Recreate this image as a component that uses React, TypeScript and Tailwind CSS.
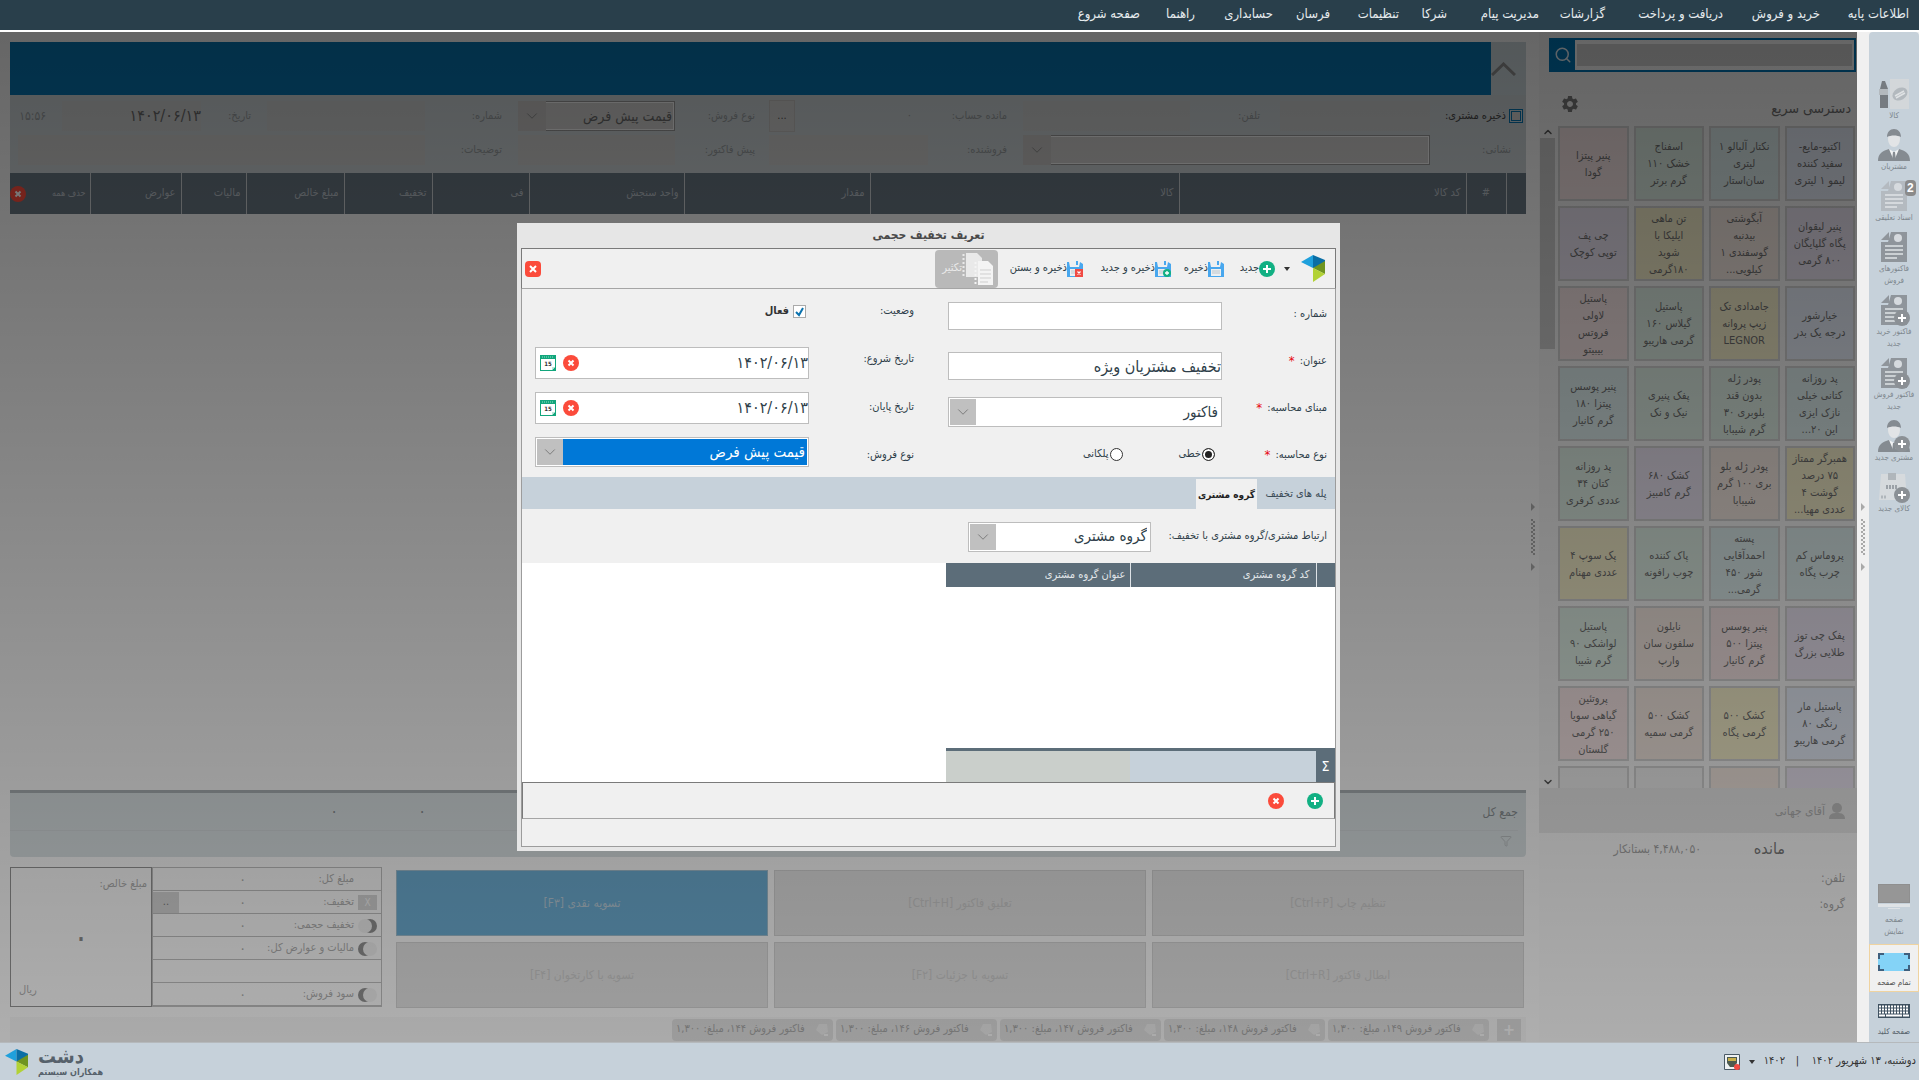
import type { ReactNode } from 'react';
import { ChevronDown, ChevronUp, Search, Filter } from 'lucide-react';
import { MdSettings } from 'react-icons/md';

const menuItems = [
  { title: 'اطلاعات پایه', width: 'w-[65px]' },
  { title: 'خرید و فروش', width: 'w-[73px]' },
  { title: 'دریافت و پرداخت', width: 'w-[94px]' },
  { title: 'گزارشات', width: 'w-[42px]' },
  { title: 'مدیریت پیام', width: 'w-[68px]' },
  { title: 'شرکا', width: 'w-[24px]' },
  { title: 'تنظیمات', width: 'w-[45px]' },
  { title: 'فرسان', width: 'w-[33px]' },
  { title: 'حسابداری', width: 'w-[54px]' },
  { title: 'راهنما', width: 'w-[31px]' },
  { title: 'صفحه شروع', width: 'w-[65px]' },
];

const tileColors = {
  blue: 'bg-[#dde3ee]',
  teal: 'bg-[#d5e4e4]',
  green: 'bg-[#d5e4db]',
  pink: 'bg-[#ecdcdc]',
  purple: 'bg-[#e1dbe8]',
  peach: 'bg-[#eadfd8]',
  yellow: 'bg-[#eae4c2]',
  none: 'bg-[#e6e6e6]',
};

const products: { title: string; color: keyof typeof tileColors }[] = [
  { title: 'اکتیو-مایع-\nسفید کننده\nلیمو ۱ لیتری', color: 'blue' },
  { title: 'نکتار آلبالو ۱\nلیتری\nسان‌استار', color: 'teal' },
  { title: 'اسفناج\nخشک ۱۱۰\nگرم برتر', color: 'green' },
  { title: 'پنیر پیتزا\nگودا', color: 'pink' },
  { title: 'پنیر لیقوان\nپگاه گلپایگان\n۸۰۰ گرمی', color: 'purple' },
  { title: 'آبگوشتی\nبیدنبه\nگوسفندی ۱\nکیلویی...', color: 'peach' },
  { title: 'تن ماهی\nایلیکا با\nشوید\n۱۸۰گرمی', color: 'yellow' },
  { title: 'چی پف\nتوپی کوچک', color: 'purple' },
  { title: 'خیارشور\nدرجه یک بدر', color: 'blue' },
  { title: 'جامدادی تک\nزیپ پروانه\nLEGNOR', color: 'yellow' },
  { title: 'پاستیل\nگیلاس ۱۶۰\nگرمی هاریبو', color: 'green' },
  { title: 'پاستیل\nلاولی\nفروتس\nبیبیتو', color: 'pink' },
  { title: 'پد روزانه\nکتانی خیلی\nنازک ایزی\nاین ۲۰...', color: 'teal' },
  { title: 'پودر ژله\nبدون قند\nبلوبری ۳۰\nگرم شیبابا', color: 'green' },
  { title: 'پفک پنیری\nنیک و نک', color: 'green' },
  { title: 'پنیر پوسس\nپیتزا ۱۸۰\nگرم کانیار', color: 'teal' },
  { title: 'همبرگر ممتاز\n۷۵ درصد\nگوشت ۴\nعددی مهیا...', color: 'yellow' },
  { title: 'پودر ژله بلو\nبری ۱۰۰ گرم\nشیبابا', color: 'peach' },
  { title: 'کشک ۶۸۰\nگرم کامبیز', color: 'purple' },
  { title: 'پد روزانه\nکتان ۳۴\nعددی کرفری', color: 'green' },
  { title: 'پروماس کم\nچرب پگاه', color: 'teal' },
  { title: 'پسته\nاحمدآقایی\nشور ۴۵۰\nگرمی...', color: 'teal' },
  { title: 'پاک کننده\nچوب رافونه', color: 'green' },
  { title: 'پک سوپ ۴\nعددی مهنام', color: 'yellow' },
  { title: 'پفک چی توز\nطلایی بزرگ', color: 'purple' },
  { title: 'پنیر پوسس\nپیتزا ۵۰۰\nگرم کانیار', color: 'pink' },
  { title: 'نایلون\nسلفون سان\nوارپ', color: 'peach' },
  { title: 'پاستیل\nلواشکی ۹۰\nگرم شیبا', color: 'green' },
  { title: 'پاستیل مار\nرنگی ۸۰\nگرمی هاریبو', color: 'blue' },
  { title: 'کشک ۵۰۰\nگرمی پگاه', color: 'yellow' },
  { title: 'کشک ۵۰۰\nگرمی سمیه', color: 'peach' },
  { title: 'پروتئین\nگیاهی سویا\n۲۵۰ گرمی\nگلستان', color: 'pink' },
  { title: '', color: 'purple' },
  { title: '', color: 'peach' },
  { title: '', color: 'none' },
  { title: '', color: 'none' },
];

const columns = [
  { title: '', width: 'w-[20px]' },
  { title: '#', width: 'w-[40px]' },
  { title: 'کد کالا', width: 'w-[287px]' },
  { title: 'کالا', width: '' },
  { title: 'مقدار', width: 'w-[186px]' },
  { title: 'واحد سنجش', width: 'w-[155px]' },
  { title: 'فی', width: 'w-[97px]' },
  { title: 'تخفیف', width: 'w-[88px]' },
  { title: 'مبلغ خالص', width: 'w-[98px]' },
  { title: 'مالیات', width: 'w-[65px]' },
  { title: 'عوارض', width: 'w-[91px]' },
];

const actions = [
  'تنظیم چاپ [Ctrl+P]',
  'تعلیق فاکتور [Ctrl+H]',
  'تسویه نقدی [F۳]',
  'ابطال فاکتور [Ctrl+R]',
  'تسویه با جزئیات [F۲]',
  'تسویه با کارتخوان [F۴]',
];

const invoices = ['۱۴۹', '۱۴۸', '۱۴۷', '۱۴۶', '۱۴۴'];

function Logo({ className }: { className: string }) {
  return (
    <svg viewBox="0 0 24 27" className={className}>
      <path d="M0 7 12 0v13z" fill="#1fa0dc" />
      <path d="M12 0l12 5v6l-12 2z" fill="#0a6ea5" />
      <path d="M24 6v13l-12-6z" fill="#6f9420" />
      <path d="M12 13l12 6-12 8z" fill="#b2d235" />
    </svg>
  );
}

function PlusCircle() {
  return (
    <svg viewBox="0 0 16 16" className="h-4 w-4 shrink-0">
      <circle cx="8" cy="8" r="8" fill="#12b083" />
      <path d="M8 4v8M4 8h8" stroke="#fff" strokeWidth="2" />
    </svg>
  );
}

function CrossCircle() {
  return (
    <svg viewBox="0 0 16 16" className="h-4 w-4 shrink-0">
      <circle cx="8" cy="8" r="8" fill="#fb4b3b" />
      <path d="M5.5 5.5l5 5M10.5 5.5l-5 5" stroke="#fff" strokeWidth="2" />
    </svg>
  );
}

function SaveIcon({ badge }: { badge?: 'plus' | 'close' }) {
  return (
    <svg viewBox="0 0 16 16" className="h-4 w-4 shrink-0">
      <path d="M0 1h2l1 5h9l1-5 3 2v13H0z" fill="#48a7ee" />
      <path d="M4 0h8v5H4z" fill="#eceff1" />
      <path d="M9 0h2v4H9z" fill="#48a7ee" />
      <path d="M3 8h10v7H3z" fill="#eceff1" />
      <path d="M4 10h8M4 12h8" stroke="#bcc6cd" />
      {badge === 'plus' && (
        <>
          <circle cx="12" cy="12" r="4" fill="#12b083" />
          <path d="M12 10v4M10 12h4" stroke="#fff" strokeWidth="1.3" />
        </>
      )}
      {badge === 'close' && (
        <>
          <path d="M8 8h8v8H8z" fill="#f04a43" />
          <path d="M10.5 10.5l3 3M13.5 10.5l-3 3" stroke="#fff" strokeWidth="1.2" />
        </>
      )}
    </svg>
  );
}

function CopyIcon() {
  return (
    <svg viewBox="0 0 32 32" className="h-8 w-8 shrink-0">
      <path d="M4 0h11l5 5v19H4z" fill="#e9e9e9" />
      <path d="M1.500 1v23" stroke="#e9e9e9" strokeWidth="2" strokeDasharray="2 2" />
      <path d="M16 8h10l5 5v19H16z" fill="#f4f4f4" />
      <path d="M13.500 9v23" stroke="#f4f4f4" strokeWidth="2" strokeDasharray="2 2" />
      <path d="M18 17h11M18 21h11M18 25h11M18 29h8" stroke="#cfcfcf" />
    </svg>
  );
}

function CalendarIcon() {
  return (
    <svg viewBox="0 0 16 16" className="h-4 w-4">
      <path d="M0 0h16v16H0z" fill="#12a67c" />
      <path d="M1 4h14v8l-3 3H1z" fill="#fff" />
      <path d="M2 2h12" stroke="#8fe0c6" strokeDasharray="1 1" />
      <path d="M12 15l3-3h-3z" fill="#bfe8dc" />
      <text x="8" y="11" fontSize="6" fontWeight="bold" textAnchor="middle" fill="#333">15</text>
    </svg>
  );
}

function PlusBadge() {
  return (
    <>
      <circle cx="24" cy="24" r="8" fill="#8b9095" />
      <path d="M24 20v8M20 24h8" stroke="#fff" strokeWidth="2" />
    </>
  );
}

function PersonIcon({ plus }: { plus?: boolean }) {
  return (
    <svg viewBox="0 0 32 32" className="h-8 w-8">
      <ellipse cx="16" cy="10" rx="6" ry="8" fill="#e2e4e6" />
      <path d="M9 8c0-5 3-8 7-8s7 3 7 8c-4-2-10-2-14 0z" fill="#858b91" />
      <path d="M0 32c0-8 5-10 11-12l5 5 5-5c6 2 11 4 11 12z" fill="#858b91" />
      <path d="M11 20l5 12 5-12-5 3z" fill="#f2f3f4" />
      <path d="M15 23h2l1 9h-4z" fill="#858b91" />
      {plus && <PlusBadge />}
    </svg>
  );
}

function DocIcon({ plus, light }: { plus?: boolean; light?: boolean }) {
  return (
    <svg viewBox="0 0 32 32" className="h-8 w-8">
      <path d="M13 1h16v30H3V11h7z" fill={light ? '#b4bac0' : '#8f959b'} />
      <path d="M3 9l8-8v8z" fill={light ? '#b4bac0' : '#8f959b'} />
      <circle cx="20" cy="7" r="4" fill="#d6dade" />
      <path d="M7 15h18M7 19h18M7 23h18M7 27h12" stroke="#dfe3e6" strokeWidth="1.5" />
      {plus && <PlusBadge />}
    </svg>
  );
}

function ProductIcon() {
  return (
    <svg viewBox="0 0 32 32" className="h-8 w-8">
      <path d="M12 1h19v30H12z" fill="#d3d7da" />
      <ellipse cx="22" cy="16" rx="8" ry="6" fill="#b3b9be" transform="rotate(-30 22 16)" />
      <path d="M17 18l9-5M18 20l9-5" stroke="#dfe2e4" strokeWidth="1.5" />
      <path d="M4 3h3l3 8v19H2V11z" fill="#757b81" />
      <path d="M1 11h9v6H1z" fill="#b3b9be" />
    </svg>
  );
}

function BoxIcon() {
  return (
    <svg viewBox="0 0 32 32" className="h-8 w-8">
      <path d="M3 3h24l2 26H1z" fill="#d6dadd" />
      <path d="M10 2h8v7h-8z" fill="#b0b6bb" />
      <path d="M8 16h12" stroke="#9ba1a7" strokeWidth="4" strokeDasharray="2 1" />
      <path d="M3 26h6" stroke="#b0b6bb" strokeWidth="3" strokeDasharray="2 1" />
      <PlusBadge />
    </svg>
  );
}

function RailButton({ icon, label, className = 'text-[#7d868d]' }: { icon: ReactNode; label: string; className?: string }) {
  return (
    <button className={`flex w-full flex-col items-center whitespace-pre-line text-center text-[8px] leading-3 ${className}`}>
      {icon}
      <span>{label}</span>
    </button>
  );
}

function Splitter({ className }: { className: string }) {
  return (
    <div className={`flex w-3 shrink-0 flex-col items-center justify-center gap-2 text-[#a9a9a9] ${className}`}>
      <svg viewBox="0 0 4 8" className="h-2 w-1"><path d="M0 0l4 4-4 4z" fill="currentColor" /></svg>
      <svg viewBox="0 0 4 36" className="h-9 w-1">
        <path d="M1 0v36M3 2v34" stroke="currentColor" strokeWidth="2" strokeDasharray="2 2" />
      </svg>
      <svg viewBox="0 0 4 8" className="h-2 w-1"><path d="M0 0l4 4-4 4z" fill="currentColor" /></svg>
    </div>
  );
}

function SelectBox({ id, value, className, selected }: { id: string; value: string; className: string; selected?: boolean }) {
  return (
    <div className={`relative border border-[#bdbdbd] bg-white p-px ${className}`}>
      <select
        id={id}
        defaultValue={value}
        className={`h-full w-full appearance-none pr-[2px] pl-7 text-[15px] outline-none ${selected ? 'bg-[#0078d7] text-white' : 'bg-white text-[#2f3f4a]'}`}
      >
        <option>{value}</option>
      </select>
      <span className="pointer-events-none absolute inset-y-px left-px flex w-[26px] items-center justify-center bg-[#c0c0c0] text-[#666]">
        <ChevronDown size={18} strokeWidth={1} />
      </span>
    </div>
  );
}

function DimSelect({ id, value }: { id: string; value: string }) {
  return (
    <div className="relative h-[30px] w-full">
      <select id={id} defaultValue={value} className="h-full w-full appearance-none border border-[#949494] bg-[#cac9c8] pr-[2px] pl-8 text-[14px] text-[#666] ring-1 ring-inset ring-[#eee] outline-none">
        <option>{value}</option>
      </select>
      <span className="pointer-events-none absolute inset-y-0 left-0 flex w-[28px] items-center justify-center bg-[#c2c0bf] text-[#777]">
        <ChevronDown size={18} strokeWidth={1} />
      </span>
    </div>
  );
}

function QuickAccess() {
  return (
    <aside className="flex w-[318px] shrink-0 flex-col bg-[#ececec]">
      <div className="mt-[6px] mr-px ml-[10px] flex h-[34px] border-2 border-[#0070ad] bg-[#f0f0f0]">
        <input aria-label="جستجو" className="m-1 mr-[2px] ml-[2px] h-[22px] min-w-0 flex-1 bg-[#cacaca] px-1 outline-none" />
        <button aria-label="جستجو" className="flex w-6 shrink-0 items-center justify-center bg-[#0070ad] text-[#dce6ee]">
          <Search size={18} strokeWidth={2} />
        </button>
      </div>
      <div className="flex h-[54px] items-end justify-between pr-[6px] pb-[6px] pl-[21px]">
        <h2 className="text-[14px] leading-6 text-[#6b6b6b]">دسترسی سریع</h2>
        <button aria-label="تنظیمات" className="mb-[6px] text-[#777]"><MdSettings size={20} /></button>
      </div>
      <div className="flex h-[662px]">
        <div className="grid flex-1 auto-rows-[75px] grid-cols-4 gap-[5px] overflow-hidden pr-[2px]">
          {products.map((product, i) => (
            <button key={i} className={`whitespace-pre-line border-2 border-[#cacaca] text-center text-[11px] leading-[17px] text-[#6a6a6a] ${tileColors[product.color]}`}>
              {product.title}
            </button>
          ))}
        </div>
        <div className="mr-[3px] ml-px flex w-[15px] flex-col items-center justify-between text-[#555]">
          <ChevronUp size={12} strokeWidth={3} />
          <div className="mb-auto h-[211px] w-[15px] bg-[#c6c6c6]" />
          <ChevronDown size={12} strokeWidth={3} />
        </div>
      </div>
      <div className="flex h-[45px] items-center gap-1 bg-[#e0e0e0] pr-3 text-[12px] text-[#aaa]">
        <svg viewBox="0 0 16 16" className="h-4 w-4">
          <circle cx="8" cy="5" r="5" fill="#bbb" />
          <path d="M0 16c0-5 3-6 8-6s8 1 8 6z" fill="#bbb" />
        </svg>
        آقای جهانی
      </div>
      <div className="flex-1 bg-[#f0f0f0] text-[12px] text-[#a0a0a0]">
        <div className="flex h-8 items-center pr-[72px]">
          <span className="w-[84px] text-[16px] text-[#777]">مانده</span>
          <span className="whitespace-nowrap">۴,۴۸۸,۰۵۰ بستانکار</span>
        </div>
        <p className="pr-3 leading-[26px]">تلفن:</p>
        <p className="pr-3 leading-[26px]">گروه:</p>
      </div>
    </aside>
  );
}

function InvoiceHeader() {
  return (
    <div>
      <div className="flex h-[53px] bg-[#c5d0d4]">
        <button aria-label="بستن" className="flex w-[35px] items-center justify-end text-[#8a8a8a]">
          <svg viewBox="0 0 25 14" className="h-[14px] w-[25px]"><path d="M1 13L12.5 2 24 13" fill="none" stroke="currentColor" strokeWidth="3" /></svg>
        </button>
        <div className="flex-1 bg-[#0670aa]" />
      </div>
      <div className="grid h-[78px] grid-cols-[93px_1fr_95px_159px_94px_157px_93px_1fr] grid-rows-[34px_34px] content-start items-center bg-[#c5cccf] pt-1 pr-[3px] pl-2 text-[11px] text-[#929799]">
        <label className="flex items-center gap-[3px] whitespace-nowrap text-[#444]">
          <input type="checkbox" className="h-[14px] w-[14px] shrink-0 appearance-none border border-[#0670aa] bg-[#cfcccb] shadow-[inset_0_0_0_1px_#c5d0d4,inset_0_0_0_2px_#0670aa]" />
          ذخیره مشتری:
        </label>
        <div className="flex items-center">
          <div className="h-[30px] w-[150px] bg-[#c7c9c9]" />
          <span className="w-[90px] pr-5">تلفن:</span>
          <div className="h-[30px] flex-1 bg-[#c7c9c9]" />
        </div>
        <span className="pr-4">مانده حساب:</span>
        <div className="flex items-center justify-between pr-4">
          <span>۰</span>
          <button className="h-8 w-[26px] border border-[#bcbab8] bg-[#c9c9c8] text-[#555]">...</button>
        </div>
        <label htmlFor="saleKind" className="pr-[14px]">نوع فروش:</label>
        <DimSelect id="saleKind" value="قیمت پیش فرض" />
        <span className="pr-4">شماره:</span>
        <div className="flex items-center">
          <div className="h-[30px] w-[158px] bg-[#c7c9c9]" />
          <span className="w-[66px] pr-4">تاریخ:</span>
          <span className="flex h-[30px] flex-1 items-center bg-[#c7c9c9] text-[16px] text-[#666]">۱۴۰۲/۰۶/۱۳</span>
          <span className="w-11 pr-4 text-[12px]">۱۵:۵۶</span>
        </div>

        <label htmlFor="address" className="pr-3">نشانی:</label>
        <DimSelect id="address" value="" />
        <span className="pr-4">فروشنده:</span>
        <div className="h-[30px] bg-[#c9c9c8]" />
        <span className="pr-[14px]">پیش فاکتور:</span>
        <div className="h-[30px] bg-[#c9c9c8]" />
        <span className="pr-4">توضیحات:</span>
        <div className="h-[30px] bg-[#c9c9c8]" />
      </div>
      <table className="w-full table-fixed bg-[#66747f] text-[11px] text-[#b4bbc2]">
        <thead>
          <tr className="h-[41px]">
            {columns.map((column, i) => (
              <th key={i} className={`border-l border-[#c5c9cc] font-normal ${column.width} ${column.title === '#' ? 'text-center' : 'pr-[5px] text-right'}`}>
                {column.title}
              </th>
            ))}
            <th className="w-[80px] pr-1 font-normal">
              <div className="flex items-center justify-between text-[9px]">
                حذف همه
                <CrossCircle />
              </div>
            </th>
          </tr>
        </thead>
      </table>
    </div>
  );
}

function Toggle({ on }: { on?: boolean }) {
  return (
    <svg viewBox="0 0 20 14" className="h-[14px] w-5">
      <circle cx={on ? 12 : 7} cy="7" r="7" fill="#8d8d8d" />
      <circle cx={on ? 7 : 12} cy="7" r="7" fill="#e8e8e8" />
    </svg>
  );
}

function SummaryRow({ label, icon, value = '۰', more }: { label: string; icon?: ReactNode; value?: string; more?: boolean }) {
  return (
    <div className="flex h-[23px] items-center border-b border-[#b9b9b9] pt-px">
      <span className="flex w-[27px] justify-center">{icon}</span>
      <span className="w-[102px] whitespace-nowrap">{label}</span>
      <span className="flex-1 pr-[6px] text-[14px]">{value}</span>
      {more && <button className="h-full w-[26px] bg-[#cfcfcf] text-[#777]">..</button>}
    </div>
  );
}

function InvoiceFooter() {
  return (
    <div>
      <div className="h-[67px] rounded-b border-t-[3px] border-[#a4aaae] bg-[#d3dadc] pr-2 text-[12px] text-[#858b8e]">
        <div className="flex h-[38px] items-center border-b border-[#ccd2d4]">
          <span className="w-[1092px]">جمع کل</span>
          <span className="w-[88px] text-[16px]">۰</span>
          <span className="text-[16px]">۰</span>
        </div>
        <Filter size={12} className="mt-1 mr-[6px] text-[#b5babc]" />
      </div>
      <div className="flex gap-[14px] pt-[10px] pr-[2px]">
        <div className="grid flex-1 grid-cols-3 gap-[6px] pt-[3px] text-[12px]">
          {actions.map((action, i) => (
            <button
              key={action}
              className={i === 2 ? 'h-[66px] border border-[#9bb8c8] bg-[#6aa8cc] text-[#b4c6d2]' : 'h-[66px] border border-[#ccc] bg-[#dbdbdb] text-[#c6c6c6]'}
            >
              {action}
            </button>
          ))}
        </div>
        <div className="flex h-[140px] text-[11px] text-[#a8a8a8]">
          <div className="w-[230px] border border-[#b9b9b9]">
            <SummaryRow label="مبلغ کل:" />
            <SummaryRow label="تخفیف:" more icon={<span className="bg-[#cecece] px-[6px] text-[10px] text-[#eee]">X</span>} />
            <SummaryRow label="تخفیف حجمی:" icon={<Toggle on />} />
            <SummaryRow label="مالیات و عوارض کل:" icon={<Toggle />} />
            <SummaryRow label="" value="" />
            <SummaryRow label="سود فروش:" icon={<Toggle />} />
          </div>
          <div className="flex w-[142px] flex-col justify-between border border-[#8f8f8f] p-1 py-2">
            <span>مبلغ خالص:</span>
            <span className="text-center text-[32px] leading-8 text-[#888]">۰</span>
            <span className="pl-1 text-left">ریال</span>
          </div>
        </div>
      </div>
      <div className="mt-[9px] flex h-[25px] items-center gap-[3px] bg-[#ececec] pr-[5px] text-[11px] text-[#a2a2a2]">
        <button aria-label="فاکتور جدید" className="ml-[5px] h-[22px] w-6 bg-[#d6d6d6] text-base leading-5 font-bold text-[#f0f0f0]">+</button>
        {invoices.map((number) => (
          <button key={number} className="flex h-[22px] w-[161px] items-center justify-between rounded-sm bg-[#d8d8d8] px-1 whitespace-nowrap">
            <svg viewBox="0 0 14 14" className="h-[14px] w-[14px] shrink-0">
              <path d="M4 1l8 0 1 8-6 3-6-5z" fill="#e4e4e4" />
              <path d="M9 11h4v2H9z" fill="#eee" />
            </svg>
            <span>فاکتور فروش {number}، مبلغ: ۱,۳۰۰</span>
          </button>
        ))}
      </div>
    </div>
  );
}

function ToolButton({ icon, label }: { icon: ReactNode; label: string }) {
  return (
    <button className="flex h-full items-center text-[11px] whitespace-nowrap text-[#2f3f4a]">
      {icon}
      {label}
    </button>
  );
}

function FieldLabel({ id, text, required }: { id: string; text: string; required?: boolean }) {
  return (
    <label htmlFor={id} className="flex h-5 items-center gap-[5px] whitespace-nowrap text-[11px] text-[#2f3f4a]">
      {text} {required && <span className="text-[13px] text-red-600">*</span>}
    </label>
  );
}

function DateField({ id }: { id: string }) {
  return (
    <div className="flex h-8 items-center gap-[7px] border border-[#bdbdbd] bg-white pl-1">
      <input id={id} defaultValue="۱۴۰۲/۰۶/۱۳" className="min-w-0 flex-1 text-[16px] text-[#2f3f4a] outline-none" />
      <button aria-label="پاک کردن"><CrossCircle /></button>
      <button aria-label="تقویم"><CalendarIcon /></button>
    </div>
  );
}

function DiscountDialog() {
  return (
    <section role="dialog" aria-labelledby="dialogTitle" className="w-[823px] bg-[#e6e6e6] px-1 pb-1">
      <h1 id="dialogTitle" className="h-[25px] text-center text-[12px] leading-[25px] font-bold text-[#4a4a4a]">تعریف تخفیف حجمی</h1>
      <div className="flex h-[41px] items-center border border-[#7a7a7a] border-b-[#a5a5a5] bg-[#f0f0f0] pr-[10px] pl-[3px]">
        <Logo className="h-[27px] w-6" />
        <button aria-label="منو" className="mr-[11px] ml-[9px] border-x-[3px] border-t-4 border-x-transparent border-t-[#333]" />
        <div className="w-[51px]"><ToolButton icon={<PlusCircle />} label="جدید" /></div>
        <div className="w-[53px]"><ToolButton icon={<SaveIcon />} label="ذخیره" /></div>
        <div className="w-[88px]"><ToolButton icon={<SaveIcon badge="plus" />} label="ذخیره و جدید" /></div>
        <div className="w-[85px]"><ToolButton icon={<SaveIcon badge="close" />} label="ذخیره و بستن" /></div>
        <button disabled className="flex h-[38px] w-[63px] items-center rounded-sm bg-[#b9b9b9] pr-1 text-[11px] text-[#e9e9e9]">
          <CopyIcon />
          تکثیر
        </button>
        <button aria-label="بستن" className="mr-auto flex h-4 w-4 items-center justify-center rounded-sm bg-[#fb4b3b]">
          <svg viewBox="0 0 8 8" className="h-2 w-2"><path d="M1 1l6 6M7 1L1 7" stroke="#fff" strokeWidth="2" /></svg>
        </button>
      </div>

      <div className="border border-t-0 border-[#9c9c9c] bg-[#f0f0f0]">
        <div className="grid h-[188px] grid-cols-[105px_274px_34px_105px_274px] items-start pr-2">
          <div className="flex flex-col gap-[27px] pt-[15px]">
            <FieldLabel id="number" text="شماره :" />
            <FieldLabel id="title" text="عنوان:" required />
            <FieldLabel id="base" text="مبنای محاسبه:" required />
            <FieldLabel id="linear" text="نوع محاسبه:" required />
          </div>
          <div className="flex flex-col pt-[13px]">
            <input id="number" className="h-7 border border-[#bdbdbd] bg-white outline-none" />
            <input id="title" defaultValue="تخفیف مشتریان ویژه" className="mt-[22px] h-7 border border-[#bdbdbd] bg-white text-[16px] text-[#2f3f4a] outline-none" />
            <SelectBox id="base" value="فاکتور" className="mt-[17px] h-[30px]" />
            <div className="mt-[17px] flex h-5 items-center gap-[56px] pr-[7px] text-[11px] text-[#2f3f4a]">
              <label className="flex items-center gap-px">
                <input id="linear" type="radio" name="calc" defaultChecked className="h-[13px] w-[13px] appearance-none rounded-full border border-[#333] bg-white checked:border-[#333] checked:bg-[#222] checked:shadow-[inset_0_0_0_2px_white]" />
                خطی
              </label>
              <label className="flex items-center gap-px">
                <input type="radio" name="calc" className="h-[13px] w-[13px] appearance-none rounded-full border border-[#333] bg-white" />
                پلکانی
              </label>
            </div>
          </div>
          <div />
          <div className="flex flex-col gap-7 pt-[12px]">
            <FieldLabel id="active" text="وضعیت:" />
            <FieldLabel id="from" text="تاریخ شروع:" />
            <FieldLabel id="to" text="تاریخ پایان:" />
            <FieldLabel id="kind" text="نوع فروش:" />
          </div>
          <div className="flex flex-col gap-[13px] pt-[12px]">
            <label className="mb-[13px] flex h-5 items-center gap-1 pr-[3px] text-[11px] font-bold text-[#333]">
              <span className="relative flex">
                <input id="active" type="checkbox" defaultChecked className="h-[13px] w-[13px] appearance-none border border-[#aaa] bg-white" />
                <svg viewBox="0 0 13 13" className="pointer-events-none absolute inset-0"><path d="M3 7l3 3 4-7" fill="none" stroke="#0b72ae" strokeWidth="2" /></svg>
              </span>
              فعال
            </label>
            <DateField id="from" />
            <DateField id="to" />
            <SelectBox id="kind" value="قیمت پیش فرض" selected className="h-[30px]" />
          </div>
        </div>

        <div role="tablist" className="flex h-8 bg-[#c6d1da] pt-[2px] text-[11px] text-[#3a4a55]">
          <button role="tab" className="w-[78px] whitespace-nowrap">پله های تخفیف</button>
          <button role="tab" aria-selected className="w-[61px] whitespace-nowrap bg-[#f0f0f0] text-[10px] font-bold text-[#222]">گروه مشتری</button>
        </div>

        <div className="flex h-[54px] items-center pt-px pr-2">
          <div className="w-[176px]"><FieldLabel id="relation" text="ارتباط مشتری/گروه مشتری با تخفیف:" /></div>
          <SelectBox id="relation" value="گروه مشتری" className="h-[30px] w-[183px]" />
        </div>

        <div className="flex h-[219px] bg-white">
          <table className="h-full w-[389px] table-fixed text-[11px]">
            <thead>
              <tr className="h-6 bg-[#5c6d79] text-[#e2e6e9]">
                <th className="w-[19px] border-l border-[#dde2e6]" />
                <th className="w-[186px] border-l border-[#dde2e6] pr-[6px] text-right font-normal">کد گروه مشتری</th>
                <th className="pr-1 text-right font-normal">عنوان گروه مشتری</th>
              </tr>
            </thead>
            <tbody>
              <tr><td colSpan={3} /></tr>
            </tbody>
            <tfoot>
              <tr className="h-[33px] border-t-[3px] border-[#5c6d79]">
                <td className="bg-[#5c6d79] text-center text-[14px] text-white">Σ</td>
                <td className="bg-[#c6d1da]" />
                <td className="bg-[#cacfcb]" />
              </tr>
            </tfoot>
          </table>
        </div>

        <div className="flex h-[37px] items-center gap-[23px] border border-[#7a7a7a] border-b-[#a5a5a5] pr-[11px]">
          <button aria-label="افزودن"><PlusCircle /></button>
          <button aria-label="حذف"><CrossCircle /></button>
        </div>
        <div className="h-[27px]" />
      </div>
    </section>
  );
}

function ToolRail() {
  return (
    <nav className="flex w-[50px] shrink-0 flex-col rounded-tr rounded-tl bg-[#c6d1da] pt-[46px]">
      <div className="flex flex-col gap-[7px]">
        <RailButton icon={<ProductIcon />} label="کالا" />
        <RailButton icon={<PersonIcon />} label="مشتریان" />
        <div className="relative">
          <RailButton icon={<DocIcon light />} label="اسناد تعلیقی" />
          <span className="absolute top-0 left-[36px] rounded-sm bg-[#8a8a8a] px-[2px] font-['Liberation_Sans'] text-[12px] leading-4 font-bold text-white">2</span>
        </div>
        <RailButton icon={<DocIcon />} label={'فاکتورهای\nفروش'} />
        <RailButton icon={<DocIcon plus />} label={'فاکتور خرید\nجدید'} />
        <RailButton icon={<DocIcon plus />} label={'فاکتور فروش\nجدید'} />
        <RailButton icon={<PersonIcon plus />} label="مشتری جدید" />
        <RailButton icon={<BoxIcon />} label="کالای جدید" />
      </div>
      <div className="mt-auto flex flex-col">
        <RailButton
          icon={<svg viewBox="0 0 32 26" className="mb-1 h-[26px] w-8"><path d="M0 0h32v19H0z" fill="#8f8f8f" /><path d="M1 1h30v17H1z" fill="#969696" /><path d="M0 20h32v3H0zM10 24h12v1H10z" fill="#dfe3e6" /></svg>}
          label={'صفحه\nنمایش'}
        />
        <RailButton
          className="mt-[6px] h-12 border border-[#efd3a0] bg-[#f0f0f0] pt-2 text-[#555]"
          icon={<svg viewBox="0 0 32 18" className="mb-[6px] h-[18px] w-8"><path d="M0 0h32v18H0z" fill="#84d3f7" /><path d="M1 6V1h5M26 1h5v5M31 12v5h-5M6 17H1v-5" fill="none" stroke="#3f5f7d" strokeWidth="2" /></svg>}
          label="تمام صفحه"
        />
        <RailButton
          className="h-[50px] pt-[12px] text-[#56616a]"
          icon={
            <svg viewBox="0 0 32 14" className="mb-2 h-[14px] w-8">
              <path d="M0 0h32v14H0z" fill="#3f5160" />
              <path d="M1 2.500h30M1 5.500h30M1 8.500h30" stroke="#fff" strokeWidth="2" strokeDasharray="2 1" />
              <path d="M1 11.500h6M8 11.500h16M25 11.500h6" stroke="#fff" strokeWidth="2" />
            </svg>
          }
          label="صفحه کلید"
        />
      </div>
    </nav>
  );
}

export default function App() {
  return (
    <div dir="rtl" className="flex min-h-screen flex-col bg-[#f0f0f0] font-['DejaVu_Sans_Condensed','DejaVu_Sans',sans-serif]">
      <header className="flex h-8 gap-6 border-b-2 border-white bg-[#293f4b] pr-[10px] text-[13px] text-[#e6ebee]">
        {menuItems.map((item) => (
          <a key={item.title} href="#" className={`whitespace-nowrap leading-[28px] ${item.width}`}>{item.title}</a>
        ))}
      </header>

      <div className="flex flex-1">
        <ToolRail />
        <Splitter className="bg-[#f0f0f0]" />
        <div className="relative flex min-w-0 flex-1">
          <QuickAccess />
          <Splitter className="bg-[#f2f2f2]" />
          <main className="flex min-w-0 flex-1 flex-col bg-[#f2f2f2] pt-[10px] pr-px pl-[10px]">
            <InvoiceHeader />
            <div className="flex-1" />
            <InvoiceFooter />
          </main>
          <div className="absolute inset-0 flex items-center justify-center bg-linear-to-b from-black/58 to-black/28">
            <DiscountDialog />
          </div>
        </div>
      </div>

      <footer className="flex h-[38px] items-center border-t border-[#b5b9bc] bg-[#c6d1da] pr-[3px] pl-[5px] text-[11px] text-[#333]">
        <span className="w-[117px] whitespace-nowrap">دوشنبه، ۱۳ شهریور ۱۴۰۲</span>
        <span className="w-[14px]">|</span>
        <span>۱۴۰۲</span>
        <span className="mx-[9px] border-x-[3px] border-t-4 border-x-transparent border-t-[#333]" />
        <svg viewBox="0 0 16 16" className="h-4 w-4">
          <path d="M.5.5h15v15H.5z" fill="#eef1f3" stroke="#4a5a66" />
          <path d="M3 3h10v6l-3 4H6l-3-4z" fill="#4c5a4f" />
          <path d="M4 4h8v3H4z" fill="#c9b04a" />
          <circle cx="13" cy="13" r="3" fill="#f04a43" />
        </svg>
        <div className="mr-auto flex flex-row-reverse items-center gap-[10px] text-[#56616b]">
          <Logo className="h-[26px] w-[23px]" />
          <div className="text-right">
            <p className="text-left text-[20px] leading-5 font-bold">دشت</p>
            <p className="text-[9px] leading-3 font-bold">همکاران سیستم</p>
          </div>
        </div>
      </footer>
    </div>
  );
}
